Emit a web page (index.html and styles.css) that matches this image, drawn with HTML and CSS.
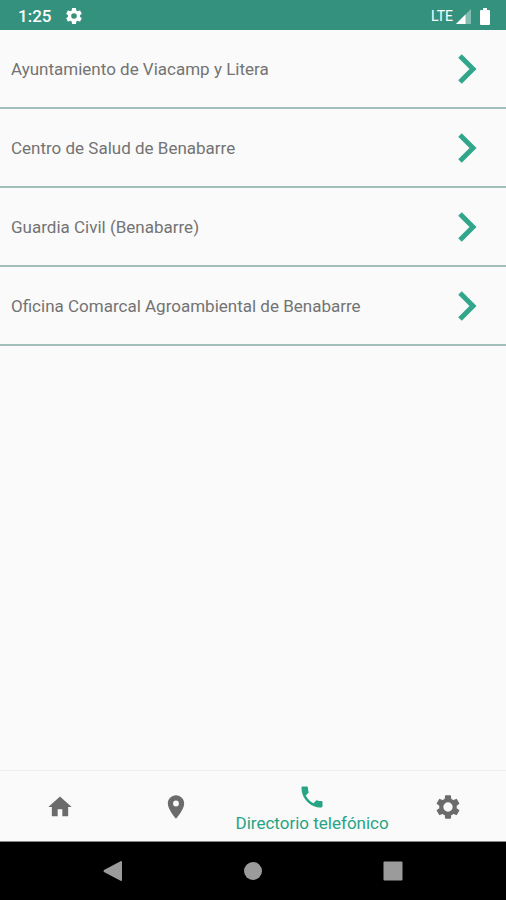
FILE: index.html
```html
<!DOCTYPE html>
<html lang="es">
<head>
<meta charset="utf-8">
<meta name="viewport" content="width=device-width, initial-scale=1">
<title>Directorio telefónico</title>
<link rel="stylesheet" href="styles.css">
</head>
<body>
<header class="status">
  <span class="time">1:25</span>
  <svg class="status-gear" viewBox="2 2 20 20" aria-hidden="true"><path d="M19.43 12.98c.04-.32.07-.64.07-.98s-.03-.66-.07-.98l2.11-1.65c.19-.15.24-.42.12-.64l-2-3.46c-.12-.22-.39-.3-.61-.22l-2.49 1c-.52-.4-1.08-.73-1.69-.98l-.38-2.65A.49.49 0 0 0 14 2h-4c-.25 0-.46.18-.49.42l-.38 2.65c-.61.25-1.17.59-1.69.98l-2.49-1c-.23-.09-.49 0-.61.22l-2 3.46c-.13.22-.07.49.12.64l2.11 1.65c-.04.32-.07.65-.07.98s.03.66.07.98l-2.11 1.65c-.19.15-.24.42-.12.64l2 3.46c.12.22.39.3.61.22l2.49-1c.52.4 1.08.73 1.69.98l.38 2.65c.03.24.24.42.49.42h4c.25 0 .46-.18.49-.42l.38-2.65c.61-.25 1.17-.59 1.69-.98l2.49 1c.23.09.49 0 .61-.22l2-3.46c.12-.22.07-.49-.12-.64l-2.11-1.65zM12 15.5a3.5 3.5 0 1 1 0-7 3.5 3.5 0 0 1 0 7z"/></svg>
  <span class="network">LTE</span>
  <svg class="signal" viewBox="0 0 15 15" aria-hidden="true"><path opacity=".4" d="M0 15 15 0v15z"/><path d="M0 15 9.500 5.500V15z"/></svg>
  <svg class="battery" viewBox="0 0 10 17" aria-hidden="true"><path d="M3 0h4v2h2q1 0 1 1v13q0 1-1 1H1q-1 0-1-1V3q0-1 1-1h2z"/></svg>
</header>
<main class="content">
  <ul class="contacts">
    <li><a class="contact" href="#ayuntamiento">Ayuntamiento de Viacamp y Litera<svg class="chevron" viewBox="0 0 20 30" aria-hidden="true"><path d="m2 2 13 13L2 28"/></svg></a></li>
    <li><a class="contact" href="#salud">Centro de Salud de Benabarre<svg class="chevron" viewBox="0 0 20 30" aria-hidden="true"><path d="m2 2 13 13L2 28"/></svg></a></li>
    <li><a class="contact" href="#guardia">Guardia Civil (Benabarre)<svg class="chevron" viewBox="0 0 20 30" aria-hidden="true"><path d="m2 2 13 13L2 28"/></svg></a></li>
    <li><a class="contact" href="#oficina">Oficina Comarcal Agroambiental de Benabarre<svg class="chevron" viewBox="0 0 20 30" aria-hidden="true"><path d="m2 2 13 13L2 28"/></svg></a></li>
  </ul>
</main>
<nav class="tabs">
  <a class="tab" href="#inicio" aria-label="Inicio"><svg class="icon" viewBox="0 0 24 24"><path d="M10 20v-6h4v6h5v-8h3L12 3 2 12h3v8z"/></svg></a>
  <a class="tab" href="#mapa" aria-label="Mapa"><svg class="icon" viewBox="0 0 24 24"><path d="M12 2C8.130 2 5 5.130 5 9c0 5.250 7 13 7 13s7-7.750 7-13c0-3.870-3.130-7-7-7zm0 9.500a2.500 2.500 0 1 1 0-5 2.500 2.500 0 0 1 0 5z"/></svg></a>
  <a class="tab tab-active" href="#directorio" aria-current="page"><svg class="icon" viewBox="0 0 24 24" aria-hidden="true"><path d="M6.620 10.790c1.440 2.830 3.760 5.140 6.590 6.590l2.200-2.200c.27-.27.67-.36 1.020-.24 1.120.37 2.330.57 3.570.57.55 0 1 .45 1 1V20c0 .55-.45 1-1 1-9.390 0-17-7.610-17-17 0-.55.45-1 1-1h3.500c.55 0 1 .45 1 1 0 1.250.2 2.450.57 3.570.11.35.03.74-.25 1.020z"/></svg><span>Directorio telefónico</span></a>
  <a class="tab" href="#ajustes" aria-label="Ajustes"><svg class="icon" viewBox="0 0 24 24"><path d="M19.43 12.98c.04-.32.07-.64.07-.98s-.03-.66-.07-.98l2.11-1.65c.19-.15.24-.42.12-.64l-2-3.46c-.12-.22-.39-.3-.61-.22l-2.49 1c-.52-.4-1.08-.73-1.69-.98l-.38-2.65A.49.49 0 0 0 14 2h-4c-.25 0-.46.18-.49.42l-.38 2.65c-.61.25-1.17.59-1.69.98l-2.49-1c-.23-.09-.49 0-.61.22l-2 3.46c-.13.22-.07.49.12.64l2.11 1.65c-.04.32-.07.65-.07.98s.03.66.07.98l-2.11 1.65c-.19.15-.24.42-.12.64l2 3.46c.12.22.39.3.61.22l2.49-1c.52.4 1.08.73 1.69.98l.38 2.65c.03.24.24.42.49.42h4c.25 0 .46-.18.49-.42l.38-2.65c.61-.25 1.17-.59 1.69-.98l2.49 1c.23.09.49 0 .61-.22l2-3.46c.12-.22.07-.49-.12-.64l-2.11-1.65zM12 16a4 4 0 1 1 0-8 4 4 0 0 1 0 8z"/></svg></a>
</nav>
<footer class="system">
  <button class="key" type="button" aria-label="Atrás"><svg viewBox="0 0 20 20"><path d="M19 1v18q0 1-1 1L1 11q-1-1 0-2L18 0q1 0 1 1z"/></svg></button>
  <button class="key" type="button" aria-label="Pantalla de inicio"><svg viewBox="0 0 20 20"><circle cx="10" cy="10" r="9"/></svg></button>
  <button class="key" type="button" aria-label="Recientes"><svg viewBox="0 0 20 20"><rect width="19" height="19" x=".5" y=".5" rx="1"/></svg></button>
</footer>
</body>
</html>
```
FILE: styles.css
```css
* {
  box-sizing: border-box;
}

body {
  display: flex;
  flex-direction: column;
  min-height: 100vh;
  margin: 0;
  background: #fafafa;
  color: #737373;
  font: 17px/20px Roboto, sans-serif;
}

a {
  color: inherit;
  text-decoration: none;
}

svg {
  display: block;
  fill: currentColor;
}

.status {
  display: flex;
  align-items: center;
  height: 30px;
  padding: 2px 16px 0 18px;
  background: #33917d;
  color: #fff;
}

.time {
  font-weight: 500;
}

.status-gear {
  width: 16px;
  height: 16px;
  margin-left: 15px;
}

.network {
  margin-left: auto;
  font-size: 14px;
}

.signal {
  width: 15px;
  height: 15px;
  margin-left: 3px;
}

.battery {
  width: 10px;
  height: 17px;
  margin-left: 9px;
}

.content {
  flex: 1;
}

.contacts {
  margin: 0;
  padding: 0;
  list-style: none;
}

.contact {
  display: flex;
  align-items: center;
  justify-content: space-between;
  height: 79px;
  padding: 0 28px 0 11px;
  border-bottom: 2px solid #a1bfb8;
}

.chevron {
  flex: none;
  width: 20px;
  height: 30px;
  fill: none;
  stroke: #32a68b;
  stroke-width: 5px;
}

.tabs {
  display: grid;
  grid-template-columns: 3fr 3fr 4fr 3fr;
  height: 72px;
  padding: 2px 0 0 2px;
  border-top: 1px solid #eee;
  border-bottom: 1px solid #888;
}

.tab {
  display: flex;
  flex-direction: column;
  align-items: center;
  justify-content: center;
  gap: 2px;
  color: #6b6b6b;
  white-space: nowrap;
}

.tab-active {
  padding-top: 2px;
  color: #26a484;
}

.icon {
  width: 28px;
  height: 28px;
}

.system {
  display: flex;
  justify-content: center;
  gap: 120px;
  height: 58px;
  background: #000;
}

.key {
  display: grid;
  place-items: center;
  width: 20px;
  padding: 0;
  border: 0;
  background: none;
  color: #9b9b9b;
}

.key svg {
  width: 20px;
  height: 20px;
}
```
